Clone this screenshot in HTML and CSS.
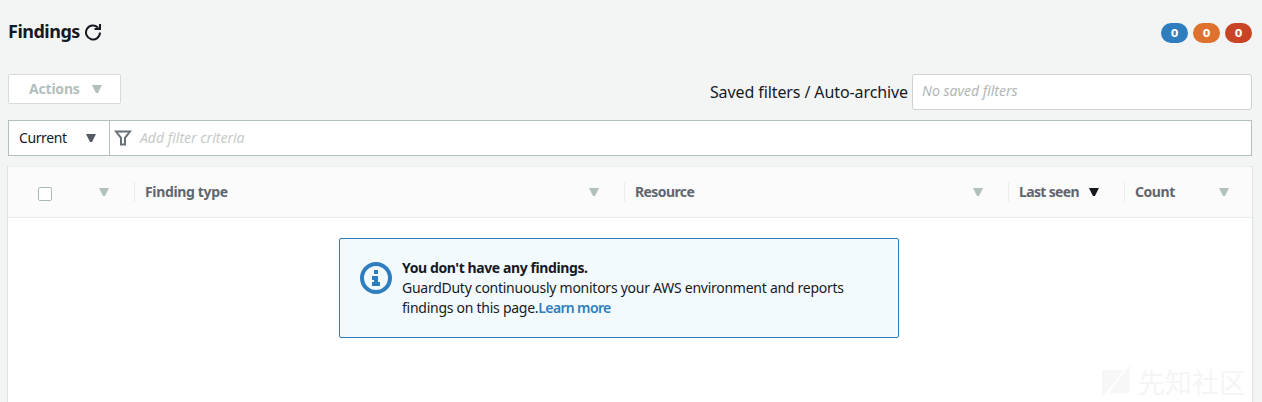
FILE: index.html
```html
<!DOCTYPE html>
<html lang="en">
<head>
<meta charset="utf-8">
<title>Findings</title>
<link rel="stylesheet" href="styles.css">
</head>
<body>
<main class="page">
  <header class="page-header">
    <h1 class="title"><span class="title-text">Findings</span>
      <svg class="refresh" width="18" height="18" viewBox="0 0 18 18"><path d="M13.8 4.4A7 7 0 1 0 16 9.6" fill="none" stroke="#16191f" stroke-width="2"/><path d="M15 1H17V7H10.500V5H13L15 4Z" fill="#16191f"/></svg>
    </h1>
    <div class="badges"><span class="badge low">0</span><span class="badge medium">0</span><span class="badge high">0</span></div>
  </header>
  <div class="toolbar">
    <button class="actions" disabled><span class="actions-text">Actions</span><i class="caret muted"></i></button>
    <div class="saved">
      <span class="saved-label">Saved filters / Auto-archive</span>
      <div class="saved-input"><span class="saved-placeholder">No saved filters</span></div>
    </div>
  </div>
  <div class="filterbar">
    <div class="scope"><span class="scope-text">Current</span><i class="caret dark"></i></div>
    <div class="criteria">
      <svg width="18" height="18" viewBox="0 0 18 18"><path d="M2 2.5H16L11 8.8V15.5H7V8.8Z" fill="none" stroke="#687078" stroke-width="2"/></svg>
      <span class="criteria-placeholder">Add filter criteria</span>
    </div>
  </div>
  <section class="table">
    <div class="thead">
      <div class="th select"><span class="checkbox"></span><i class="caret muted"></i></div>
      <div class="th"><span class="th-type">Finding type</span><i class="caret muted"></i></div>
      <div class="th"><span class="th-resource">Resource</span><i class="caret muted"></i></div>
      <div class="th seen"><span class="th-seen">Last seen</span><i class="caret active"></i></div>
      <div class="th last"><span class="th-count">Count</span><i class="caret muted"></i></div>
    </div>
    <div class="notice">
      <svg class="info" width="32" height="32" viewBox="0 0 32 32"><circle cx="16" cy="16" r="14" fill="none" stroke="#2e7dbf" stroke-width="4"/><path d="M14 8h4v4h-4zM12 14h6v6h2v4h-8v-4h2v-2h-2z" fill="#2e7dbf"/></svg>
      <div class="notice-body">
        <div><strong class="notice-title">You don't have any findings.</strong></div>
        <div><span class="notice-line">GuardDuty continuously monitors your AWS environment and reports</span></div>
        <div><span class="notice-line">findings on this page.</span><a class="learn">Learn more</a></div>
      </div>
    </div>
    <div class="watermark">
      <svg width="28" height="34" viewBox="0 0 28 34"><path d="M0 5H22L0 33ZM27.500 0V28H7Z" fill="#f7f7f7"/></svg>
      <span>先知社区</span>
    </div>
  </section>
</main>
</body>
</html>
```
FILE: styles.css
```css
* { box-sizing: border-box; }
body {
  margin: 0;
  height: 402px;
  overflow: hidden;
  background: #f3f5f4;
  color: #16191f;
  font: 14px/20px "Noto Sans", "Open Sans", sans-serif;
}
.page { display: flex; flex-direction: column; height: 402px; padding: 0 9px 0 7px; }
.page-header { display: flex; justify-content: space-between; height: 74px; padding: 21px 1px 0; }
.title { display: flex; gap: 4px; margin: 0; height: 20px; font-size: 18px; line-height: 20px; font-weight: 700; }
.title-text { width: 72px; letter-spacing: -0.5px; white-space: nowrap; }
.refresh { margin-top: 2px; }
.badges { display: flex; gap: 5px; padding-top: 2px; }
.badge { width: 27px; height: 20px; border-radius: 10px; color: #fff; font: 700 11px/22px "DejaVu Sans", sans-serif; text-align: center; }
.low { background: #2e7dbf; }
.medium { background: #df712e; }
.high { background: #c94425; }
.caret { flex: none; width: 10px; height: 8px; clip-path: polygon(0 0, 100% 0, 60% 100%, 40% 100%); }
.muted { background: #b3bfbd; }
.dark { background: #545b64; }
.active { background: #16191f; }
.toolbar { display: flex; justify-content: space-between; padding: 0 1px; height: 46px; }
.actions { display: flex; align-items: center; justify-content: space-between; width: 113px; height: 30px; padding: 0 18px 0 20px; border: 1px solid #d5dbdb; border-radius: 2px; background: #fff; color: #b3bfbd; font: 700 14px/20px "Noto Sans", sans-serif; }
.actions-text { letter-spacing: -0.2px; }
.saved { display: flex; gap: 4px; height: 36px; }
.saved-label { font-size: 16px; line-height: 36px; letter-spacing: -0.1px; white-space: nowrap; }
.saved-input { width: 340px; height: 36px; padding: 0 9px; border: 1px solid #ccd2d1; border-radius: 3px; background: #fff; color: #b2b6b6; font-style: italic; line-height: 32px; }
.filterbar { display: flex; height: 36px; margin: 0 1px 10px; border: 1px solid #b3bfbd; background: #fff; line-height: 34px; }
.scope { display: flex; align-items: center; justify-content: space-between; width: 101px; padding: 0 13px 0 10px; border-right: 1px solid #b3bfbd; }
.scope-text { letter-spacing: -0.4px; }
.criteria { display: flex; align-items: center; gap: 8px; padding-left: 4px; color: #c5cbcb; font-style: italic; }
.table { position: relative; flex: 1; border: 1px solid #dde2e1; border-top-color: #eaeded; border-bottom: 0; background: #fff; }
.thead { display: grid; grid-template-columns: 127px 490px 384px 116px 1fr; height: 51px; padding: 15px 0; border-bottom: 1px solid #eaeded; background: #fbfbfb; color: #5f666e; font-weight: 700; }
.th { display: flex; align-items: center; justify-content: space-between; height: 20px; padding: 0 25px 0 10px; border-right: 1px solid #eaeded; white-space: nowrap; }
.th.select { padding-left: 30px; }
.th.seen { justify-content: flex-start; gap: 10px; }
.th.last { padding-right: 23px; border: 0; }
.th-type { letter-spacing: -0.35px; }
.th-resource { letter-spacing: -0.6px; }
.th-seen { letter-spacing: -0.65px; }
.th-count { letter-spacing: -0.45px; }
.checkbox { width: 14px; height: 14px; margin-top: 4px; border: 1px solid #aab7b8; border-radius: 2px; background: #fff; }
.notice { display: flex; gap: 10px; width: 560px; height: 100px; margin: 20px 0 0 331px; padding: 19px 20px; border: 1px solid #2e7dbf; border-radius: 2px; background: #f3fafe; white-space: nowrap; }
.info { flex: none; margin-top: 4px; }
.notice-title { letter-spacing: -0.4px; }
.notice-line { letter-spacing: -0.26px; }
.learn { color: #2e7dbf; font-weight: 600; letter-spacing: -0.65px; }
.watermark { position: absolute; right: 6px; bottom: 3px; display: flex; align-items: center; gap: 8px; color: #f5f5f5; font: 27px/34px "Noto Sans CJK SC", sans-serif; }
```
